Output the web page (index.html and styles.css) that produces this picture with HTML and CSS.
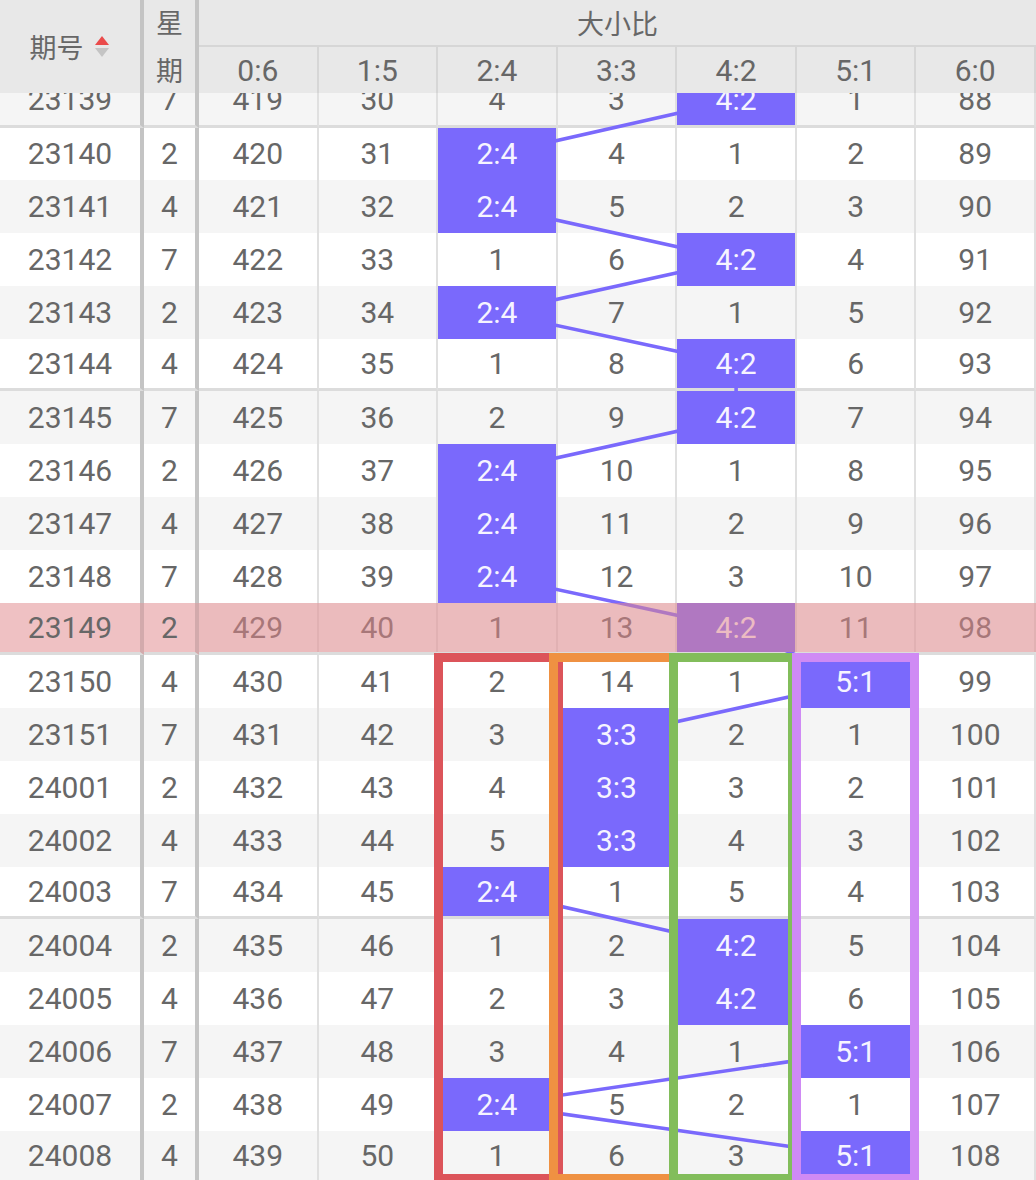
FILE: index.html
```html
<!DOCTYPE html>
<html lang="zh">
<head>
<meta charset="utf-8">
<title>大小比走势</title>
<link rel="stylesheet" href="styles.css">
</head>
<body>
<div class="head">
  <div class="h-id"><span>期号</span><span class="sort"><i class="up"></i><i class="down"></i></span></div>
  <div class="h-week">星<br>期</div>
  <div class="h-group">大小比</div>
  <div class="h-sub">0:6</div>
  <div class="h-sub">1:5</div>
  <div class="h-sub">2:4</div>
  <div class="h-sub">3:3</div>
  <div class="h-sub">4:2</div>
  <div class="h-sub">5:1</div>
  <div class="h-sub">6:0</div>
</div>
<div class="body-wrap">
  <div class="grid">
    <div class="row"><div class="c">23139</div><div class="c">7</div><div class="c">419</div><div class="c">30</div><div class="c">4</div><div class="c">3</div><div class="c"><span class="hit">4:2</span></div><div class="c">1</div><div class="c">88</div></div>
    <div class="row"><div class="c">23140</div><div class="c">2</div><div class="c">420</div><div class="c">31</div><div class="c"><span class="hit">2:4</span></div><div class="c">4</div><div class="c">1</div><div class="c">2</div><div class="c">89</div></div>
    <div class="row"><div class="c">23141</div><div class="c">4</div><div class="c">421</div><div class="c">32</div><div class="c"><span class="hit">2:4</span></div><div class="c">5</div><div class="c">2</div><div class="c">3</div><div class="c">90</div></div>
    <div class="row"><div class="c">23142</div><div class="c">7</div><div class="c">422</div><div class="c">33</div><div class="c">1</div><div class="c">6</div><div class="c"><span class="hit">4:2</span></div><div class="c">4</div><div class="c">91</div></div>
    <div class="row"><div class="c">23143</div><div class="c">2</div><div class="c">423</div><div class="c">34</div><div class="c"><span class="hit">2:4</span></div><div class="c">7</div><div class="c">1</div><div class="c">5</div><div class="c">92</div></div>
    <div class="row"><div class="c">23144</div><div class="c">4</div><div class="c">424</div><div class="c">35</div><div class="c">1</div><div class="c">8</div><div class="c"><span class="hit">4:2</span></div><div class="c">6</div><div class="c">93</div></div>
    <div class="row"><div class="c">23145</div><div class="c">7</div><div class="c">425</div><div class="c">36</div><div class="c">2</div><div class="c">9</div><div class="c"><span class="hit">4:2</span></div><div class="c">7</div><div class="c">94</div></div>
    <div class="row"><div class="c">23146</div><div class="c">2</div><div class="c">426</div><div class="c">37</div><div class="c"><span class="hit">2:4</span></div><div class="c">10</div><div class="c">1</div><div class="c">8</div><div class="c">95</div></div>
    <div class="row"><div class="c">23147</div><div class="c">4</div><div class="c">427</div><div class="c">38</div><div class="c"><span class="hit">2:4</span></div><div class="c">11</div><div class="c">2</div><div class="c">9</div><div class="c">96</div></div>
    <div class="row"><div class="c">23148</div><div class="c">7</div><div class="c">428</div><div class="c">39</div><div class="c"><span class="hit">2:4</span></div><div class="c">12</div><div class="c">3</div><div class="c">10</div><div class="c">97</div></div>
    <div class="row hl"><div class="c">23149</div><div class="c">2</div><div class="c">429</div><div class="c">40</div><div class="c">1</div><div class="c">13</div><div class="c"><span class="hit">4:2</span></div><div class="c">11</div><div class="c">98</div></div>
    <div class="row"><div class="c">23150</div><div class="c">4</div><div class="c">430</div><div class="c">41</div><div class="c">2</div><div class="c">14</div><div class="c">1</div><div class="c"><span class="hit">5:1</span></div><div class="c">99</div></div>
    <div class="row"><div class="c">23151</div><div class="c">7</div><div class="c">431</div><div class="c">42</div><div class="c">3</div><div class="c"><span class="hit">3:3</span></div><div class="c">2</div><div class="c">1</div><div class="c">100</div></div>
    <div class="row"><div class="c">24001</div><div class="c">2</div><div class="c">432</div><div class="c">43</div><div class="c">4</div><div class="c"><span class="hit">3:3</span></div><div class="c">3</div><div class="c">2</div><div class="c">101</div></div>
    <div class="row"><div class="c">24002</div><div class="c">4</div><div class="c">433</div><div class="c">44</div><div class="c">5</div><div class="c"><span class="hit">3:3</span></div><div class="c">4</div><div class="c">3</div><div class="c">102</div></div>
    <div class="row"><div class="c">24003</div><div class="c">7</div><div class="c">434</div><div class="c">45</div><div class="c"><span class="hit">2:4</span></div><div class="c">1</div><div class="c">5</div><div class="c">4</div><div class="c">103</div></div>
    <div class="row"><div class="c">24004</div><div class="c">2</div><div class="c">435</div><div class="c">46</div><div class="c">1</div><div class="c">2</div><div class="c"><span class="hit">4:2</span></div><div class="c">5</div><div class="c">104</div></div>
    <div class="row"><div class="c">24005</div><div class="c">4</div><div class="c">436</div><div class="c">47</div><div class="c">2</div><div class="c">3</div><div class="c"><span class="hit">4:2</span></div><div class="c">6</div><div class="c">105</div></div>
    <div class="row"><div class="c">24006</div><div class="c">7</div><div class="c">437</div><div class="c">48</div><div class="c">3</div><div class="c">4</div><div class="c">1</div><div class="c"><span class="hit">5:1</span></div><div class="c">106</div></div>
    <div class="row"><div class="c">24007</div><div class="c">2</div><div class="c">438</div><div class="c">49</div><div class="c"><span class="hit">2:4</span></div><div class="c">5</div><div class="c">2</div><div class="c">1</div><div class="c">107</div></div>
    <div class="row"><div class="c">24008</div><div class="c">4</div><div class="c">439</div><div class="c">50</div><div class="c">1</div><div class="c">6</div><div class="c">3</div><div class="c"><span class="hit">5:1</span></div><div class="c">108</div></div>
    <svg class="lines" viewBox="0 0 837 1108.8" xmlns="http://www.w3.org/2000/svg">
      <polyline points="537.1,24.9 297.9,79.2 297.9,132 537.1,184.8 297.9,237.6 537.1,288.9 537.1,343.2 297.9,396 297.9,448.8 297.9,501.6 537.1,552.9 656.7,607.2 417.5,660 417.5,712.8 417.5,765.6 297.9,816.9 537.1,871.2 537.1,924 656.7,976.8 297.9,1029.6 656.7,1080.9" fill="none" stroke="#7a69fc" stroke-width="3.6"/>
    </svg>
    <div class="box box-red"></div>
    <div class="box box-orange"></div>
    <div class="box box-green"></div>
    <div class="box box-violet"></div>
  </div>
</div>
</body>
</html>
```
FILE: styles.css
```css
html, body {
  margin: 0;
  padding: 0;
  background: #fff;
}
body {
  width: 1036px;
  height: 1180px;
  overflow: hidden;
  font-family: Roboto, "Noto Sans CJK SC", sans-serif;
  color: #676767;
}

/* header */
.head {
  display: grid;
  grid-template-columns: 144px 55px repeat(7, 1fr);
  grid-template-rows: 47px 46px;
  background: #e8e8e8;
}
.h-id {
  grid-row: 1 / 3;
  border-right: 4px solid #c4c4c4;
  display: flex;
  align-items: center;
  justify-content: center;
  gap: 11px;
  font-size: 27px;
  padding-right: 2px;
}
.sort {
  display: flex;
  flex-direction: column;
  gap: 3px;
}
.sort i {
  display: block;
  width: 0;
  height: 0;
  border-left: 7px solid transparent;
  border-right: 7px solid transparent;
}
.sort .up {
  border-bottom: 9px solid #ea4b4b;
}
.sort .down {
  border-top: 9px solid #c4c4c4;
}
.h-week {
  grid-row: 1 / 3;
  border-right: 4px solid #c4c4c4;
  text-align: center;
  font-size: 27px;
  line-height: 48px;
}
.h-group {
  grid-column: 3 / 10;
  border-bottom: 2px solid #d6d6d6;
  display: flex;
  align-items: center;
  justify-content: center;
  font-size: 27px;
}
.h-sub {
  border-right: 2px solid #d6d6d6;
  display: flex;
  align-items: center;
  justify-content: center;
  font-size: 30px;
}

/* body */
.body-wrap {
  height: 1087px;
  overflow: hidden;
}
.grid {
  margin-top: -18.3px;
  position: relative;
  z-index: 0;
  display: grid;
  grid-template-columns: 144px 55px repeat(7, 1fr);
  grid-auto-rows: 52.8px;
}
.row {
  display: contents;
}
.c {
  box-sizing: border-box;
  display: flex;
  align-items: center;
  justify-content: center;
  font-size: 30px;
  background: #fff;
  border-right: 2px solid #e0e0e0;
}
.row:nth-child(odd) > .c {
  background: #f5f5f5;
}
.row > .c:nth-child(1),
.row > .c:nth-child(2) {
  border-right: 4px solid #c4c4c4;
}
.row:nth-child(5n+1) > .c {
  border-bottom: 3px solid #dcdcdc;
}
.hit {
  position: relative;
  z-index: 2;
  align-self: stretch;
  flex: 1;
  display: flex;
  align-items: center;
  justify-content: center;
  background: #7a69fc;
  color: #f6f4ff;
}

/* highlighted row */
.row.hl > .c:nth-child(-n+2) {
  background: #efc1c3;
  border-right-color: #d3aaac;
}
.row.hl > .c:nth-child(n+3) {
  position: relative;
}
.row.hl > .c:nth-child(n+3)::after {
  content: "";
  position: absolute;
  top: 0;
  left: 0;
  right: -2px;
  bottom: 0;
  background: rgba(226, 134, 138, 0.52);
  z-index: 3;
}

/* trend lines */
.lines {
  position: absolute;
  left: 199px;
  top: 0;
  width: 837px;
  height: 1108.8px;
  z-index: 1;
  pointer-events: none;
}

/* column frames */
.box {
  position: absolute;
  top: 577.8px;
  height: 530px;
  box-sizing: border-box;
  border: 9px solid;
  z-index: 4;
}
.box-red {
  left: 434px;
  width: 129px;
  border-color: #dc545a;
}
.box-orange {
  left: 549px;
  width: 129px;
  border-color: #ef9142;
}
.box-green {
  left: 669px;
  width: 128px;
  border-color: #82bd5b;
}
.box-violet {
  left: 792px;
  width: 127px;
  border-color: #cf8af4;
}
```
